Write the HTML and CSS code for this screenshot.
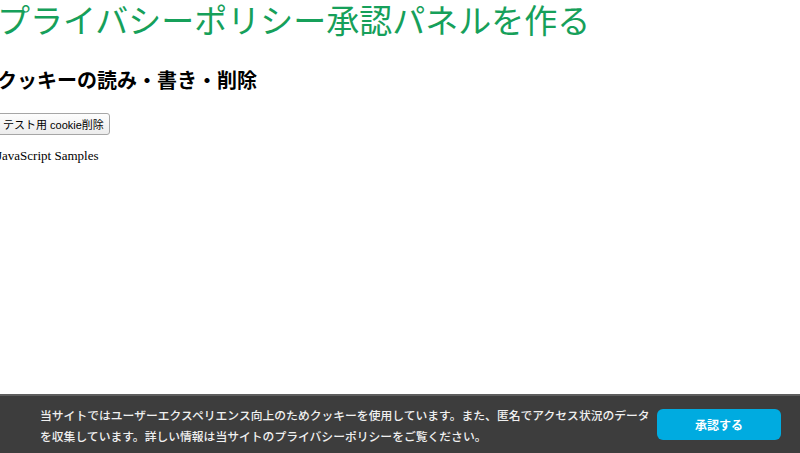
FILE: index.html
```html
<!DOCTYPE html>
<html lang="ja">
<head>
<meta charset="utf-8">
<title>プライバシーポリシー承認パネルを作る</title>
<link rel="stylesheet" href="styles.css">
</head>
<body>
<main class="page">
  <h1 class="title">プライバシーポリシー承認パネルを作る</h1>
  <h2 class="subtitle">クッキーの読み・書き・削除</h2>
  <button class="test-btn" type="button">テスト用 cookie削除</button>
  <p class="samples">JavaScript Samples</p>
</main>
<div class="consent">
  <p class="consent-text">当サイトではユーザーエクスペリエンス向上のためクッキーを使用しています。また、匿名でアクセス状況のデータを収集しています。詳しい情報は当サイトのプライバシーポリシーをご覧ください。</p>
  <button class="consent-btn" type="button">承認する</button>
</div>
</body>
</html>
```
FILE: styles.css
```css
html, body {
  margin: 0;
  padding: 0;
  background: #ffffff;
}
body {
  font-family: "Liberation Serif", "Noto Sans CJK JP", serif;
  color: #000;
}
.page {
  margin-left: -3px;
  padding-top: 3px;
}
.title {
  margin: 0;
  font-size: 33px;
  line-height: 38px;
  font-weight: normal;
  color: #16a05a;
  font-family: "Liberation Serif", "Noto Sans CJK JP", serif;
}
.subtitle {
  margin: 27px 0 0;
  font-size: 20px;
  line-height: 26px;
  font-weight: bold;
}
.test-btn {
  display: block;
  margin: 19px 0 0;
  height: 22px;
  padding: 0 5px;
  font-family: "Liberation Sans", "Noto Sans CJK JP", sans-serif;
  font-size: 11px;
  color: #000;
  background: linear-gradient(#fdfdfd, #ececec);
  border: 1px solid #a6a6a6;
  border-radius: 3px;
}
.samples {
  margin: 13px 0 0;
  font-size: 13px;
  line-height: 16px;
}
.consent {
  position: fixed;
  left: 0;
  right: 0;
  bottom: 0;
  height: 59px;
  background: #3d3d3d;
  border-top: 2px solid #5e5e5e;
  display: flex;
  align-items: center;
  padding-left: 40px;
  box-sizing: border-box;
}
.consent-text {
  margin: 0;
  width: 617px;
  flex: none;
  font-family: "Noto Sans CJK JP", sans-serif;
  font-size: 11.8px;
  line-height: 21px;
  color: #f0f0f0;
  font-weight: 500;
}
.consent-btn {
  flex: none;
  width: 124px;
  height: 31px;
  border: none;
  border-radius: 6px;
  background: #00abe0;
  color: #fff;
  font-family: "Noto Sans CJK JP", sans-serif;
  font-size: 12px;
  font-weight: bold;
}
```
